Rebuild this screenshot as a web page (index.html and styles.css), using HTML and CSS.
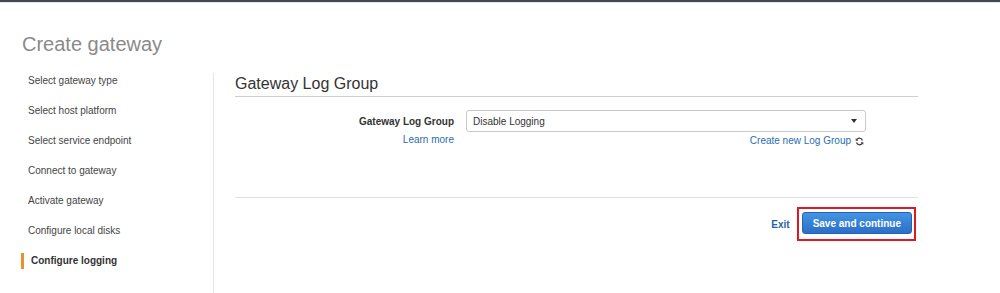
FILE: index.html
```html
<!DOCTYPE html>
<html lang="en">
<head>
<meta charset="UTF-8" />
<meta name="viewport" content="width=device-width, initial-scale=1" />
<title>Create gateway</title>
<link rel="stylesheet" href="styles.css">
</head>
<body>

<div class="topbar"></div>

<div class="page">
  <h1 class="page-title">Create gateway</h1>

  <div class="wizard">
    <ul class="steps">
      <li>Select gateway type</li>
      <li>Select host platform</li>
      <li>Select service endpoint</li>
      <li>Connect to gateway</li>
      <li>Activate gateway</li>
      <li>Configure local disks</li>
      <li class="active">Configure logging</li>
    </ul>

    <div class="step-body">
      <h2 class="section-title">Gateway Log Group</h2>

      <div class="form-row">
        <div class="label-col">
          <label for="logGroup">Gateway Log Group</label>
          <a href="#" class="link">Learn more</a>
        </div>
        <div class="field-col">
          <div class="select" id="logGroup">
            <span>Disable Logging</span>
            <span class="caret"></span>
          </div>
          <div class="field-help">
            <a href="#" class="link">Create new Log Group</a>
            <svg class="refresh" width="9" height="9" viewBox="0 0 16 16" aria-hidden="true">
              <path d="M13.2 6.2A5.5 5.5 0 0 0 3.3 4.6" fill="none" stroke="#333" stroke-width="2.2"/>
              <path d="M1.2 2.2v4.6h4.6z" fill="#333"/>
              <path d="M2.8 9.8a5.5 5.5 0 0 0 9.9 1.6" fill="none" stroke="#333" stroke-width="2.2"/>
              <path d="M14.8 13.8V9.2h-4.6z" fill="#333"/>
            </svg>
          </div>
        </div>
      </div>

      <div class="actions">
        <a href="#" class="exit">Exit</a>
        <span class="highlight">
          <button class="primary">Save and continue</button>
        </span>
      </div>
    </div>
  </div>
</div>

</body>
</html>
```

FILE: styles.css
```css
body {
  margin: 0;
  font-family: 'Liberation Sans', Arial, Helvetica, sans-serif;
  font-size: 10px;
  color: #444;
  background: #fff;
}

.topbar {
  height: 2px;
  background: #3e4852;
  border-bottom: 1px solid #e6e8ea;
}

.page-title {
  margin: 29px 0 0 22px;
  font-size: 20px;
  line-height: 24px;
  font-weight: normal;
  color: #8a8a8a;
}

.wizard {
  display: flex;
  margin-top: 17px;
  min-height: 220px;
}

/* left step list */
.steps {
  list-style: none;
  margin: 0;
  padding: 0 0 0 21px;
  width: 192px;
  border-right: 1px solid #e4e4e4;
}

.steps li {
  padding-left: 7px;
  line-height: 16px;
  margin-bottom: 14px;
  color: #444;
}

.steps li.active {
  border-left: 3px solid #e8912d;
  font-weight: bold;
  color: #333;
}

.step-body {
  flex: 1;
  padding: 1px 82px 0 21px;
}

.section-title {
  margin: 0;
  padding-bottom: 2px;
  font-size: 16px;
  line-height: 20px;
  font-weight: normal;
  color: #333;
  border-bottom: 1px solid #cfcfcf;
}

.form-row {
  display: grid;
  grid-template-columns: 219px 400px;
  column-gap: 12px;
  margin-top: 13px;
}

.label-col {
  display: flex;
  flex-direction: column;
  align-items: flex-end;
}

.label-col label {
  font-weight: bold;
  color: #333;
  line-height: 23px;
}

.link {
  color: #2a6db3;
  text-decoration: none;
  line-height: 14px;
}

.select {
  box-sizing: border-box;
  height: 22px;
  display: flex;
  justify-content: space-between;
  align-items: center;
  padding: 0 8px 0 6px;
  border: 1px solid #c9c9c9;
  border-radius: 3px;
  color: #333;
}

.caret {
  width: 0;
  height: 0;
  border-left: 3.5px solid transparent;
  border-right: 3.5px solid transparent;
  border-top: 4px solid #333;
}

.field-help {
  display: flex;
  justify-content: flex-end;
  align-items: center;
  gap: 4px;
  padding-right: 2px;
  margin-top: 2px;
}

.actions {
  display: flex;
  justify-content: flex-end;
  align-items: center;
  gap: 7px;
  margin-top: 49px;
  padding: 9px 2px 0 0;
  border-top: 1px solid #e2e2e2;
}

.exit {
  color: #1f63a8;
  font-weight: bold;
  text-decoration: none;
}

.highlight {
  display: inline-flex;
  padding: 3px 2px 5px 3px;
  border: 2px solid #dd1a22;
}

.primary {
  box-sizing: border-box;
  height: 22px;
  padding: 0 10px;
  font-family: inherit;
  font-size: 10px;
  font-weight: bold;
  color: #fff;
  background: linear-gradient(#4394e4, #2b6fc6);
  border: 1px solid #2462b0;
  border-radius: 3px;
  cursor: pointer;
}
```
